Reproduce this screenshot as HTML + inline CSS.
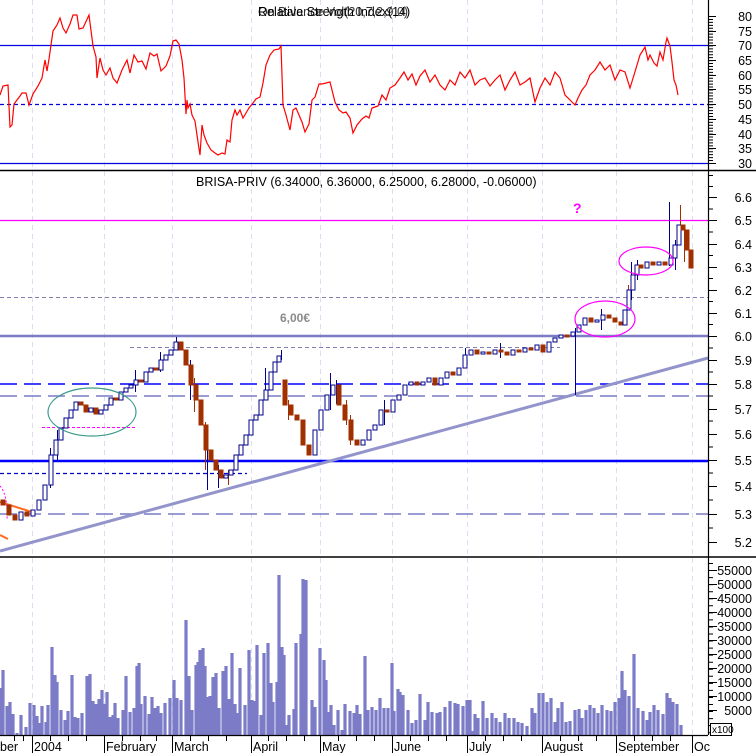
<!DOCTYPE html>
<html><head><meta charset="utf-8"><style>
html,body{margin:0;padding:0;background:#fff;}
svg{display:block;font-family:"Liberation Sans",sans-serif;}
.u{fill:#fff;stroke:#00008b;stroke-width:1;width:4px}
.d{fill:#a03000;stroke:#a03000;stroke-width:1;width:4px}
.lab{font-size:12.5px;fill:#000;text-anchor:end}
</style></head><body>
<svg width="756" height="753" viewBox="0 0 756 753" xmlns="http://www.w3.org/2000/svg">
<rect width="756" height="753" fill="#fff"/>
<g stroke="#dcdcf4" stroke-width="1" stroke-dasharray="5 4">
<path d="M32.5 0V735M104.5 0V735M172.5 0V735M251.5 0V735M320.5 0V735M392.5 0V735M467.5 0V735M542.5 0V735M616.5 0V735M692.5 0V735"/>
</g>
<line x1="0" y1="45.5" x2="708" y2="45.5" stroke="#0000e0" stroke-width="1.3"/>
<line x1="0" y1="163.5" x2="708" y2="163.5" stroke="#0000e0" stroke-width="1.3"/>
<line x1="0" y1="104.5" x2="708" y2="104.5" stroke="#0000e0" stroke-width="1.3" stroke-dasharray="4 3"/>
<polyline fill="none" stroke="#ff0000" stroke-width="1.2" points="0,95 3,86 8,85 10,127 12,125 14,104 20,96 22,93 26,93 29,105 33,94 38,86 42,78 45,60 47,71 49,59 51,45 53,31 57,25 60,18 63,28 66,33 70,24 73,15 77,15 79,29 83,28 89,15 93,46 96,57 97,78 100,58 103,70 106,75 110,68 113,78 117,83 122,70 127,60 130,73 134,55 138,62 142,61 146,69 150,53 154,56 157,54 161,71 166,66 170,56 173,41 176,40 179,44 182,60 184,78 186,114 187,100 188,108 190,104 192,115 195,121 198,142 200,155 202,125 204,135 207,143 211,150 215,153 218,155 222,153 225,154 227,140 230,142 232,120 235,110 237,115 240,110 243,118 246,113 249,108 253,103 256,99 260,97 263,83 266,65 270,55 274,50 279,49 281,46 283,105 286,115 290,130 293,110 296,108 299,115 302,122 305,132 309,124 312,100 315,97 319,84 322,84 330,82 335,102 339,110 343,113 346,112 350,118 353,133 357,125 362,119 366,116 369,118 372,108 378,106 382,95 386,100 390,88 395,85 400,78 404,72 408,80 412,74 416,85 420,76 425,70 430,82 435,75 440,85 445,90 450,80 455,85 460,72 465,78 470,70 475,85 480,80 485,78 490,86 495,80 500,75 505,90 510,80 515,72 520,85 525,82 530,78 535,102 540,88 545,78 550,85 555,72 560,78 565,95 570,100 575,105 578,98 582,90 586,85 590,75 595,70 600,62 605,70 610,65 615,80 620,70 625,72 630,88 634,75 640,55 645,47 648,60 650,55 654,63 657,66 660,52 663,60 666,42 667,38 670,46 672,62 674,80 676,85 678,95"/>
<text x="258" y="16" font-size="12.5" fill="#000">Relative Strength Index(14)</text>
<text x="258" y="16" font-size="12.5" fill="#000" opacity="0.8">On Balance Vol(20,7,2,9,0)</text>
<line x1="0" y1="170.5" x2="756" y2="170.5" stroke="#000" stroke-width="1.5"/>
<line x1="0" y1="220.5" x2="708" y2="220.5" stroke="#ff00ff" stroke-width="1.3"/>
<line x1="0" y1="297.5" x2="708" y2="297.5" stroke="#8080b0" stroke-width="1" stroke-dasharray="4 3"/>
<line x1="130" y1="347.5" x2="560" y2="347.5" stroke="#8080b0" stroke-width="1" stroke-dasharray="4 3"/>
<line x1="0" y1="336" x2="708" y2="336" stroke="#7b7bc6" stroke-width="2.5"/>
<line x1="0" y1="384" x2="708" y2="384" stroke="#0000ff" stroke-width="1.5" stroke-dasharray="17 7"/>
<line x1="0" y1="396" x2="708" y2="396" stroke="#7b7bc6" stroke-width="1.5" stroke-dasharray="17 7"/>
<line x1="0" y1="461" x2="708" y2="461" stroke="#0000ff" stroke-width="2.5"/>
<line x1="0" y1="473.5" x2="247" y2="473.5" stroke="#0000c0" stroke-width="1.2" stroke-dasharray="4 3"/>
<line x1="0" y1="514" x2="708" y2="514" stroke="#7b7bc6" stroke-width="1.5" stroke-dasharray="17 7"/>
<line x1="42" y1="427.5" x2="135" y2="427.5" stroke="#ff00ff" stroke-width="1" stroke-dasharray="3 2"/>
<line x1="0" y1="551" x2="708" y2="358" stroke="#9494cc" stroke-width="3"/>
<line x1="0" y1="502" x2="32" y2="512" stroke="#ff6a20" stroke-width="2"/>
<line x1="0" y1="535" x2="8" y2="539" stroke="#ff6a20" stroke-width="2"/>
<path d="M0 486 Q8 495 7 520" fill="none" stroke="#ff00ff" stroke-width="1" stroke-dasharray="2 2"/>
<text x="280" y="322" font-size="12" font-weight="bold" fill="#8a8a8a">6,00€</text>
<text x="573" y="213" font-size="14" font-weight="bold" fill="#ff00ff">?</text>
<text x="196" y="186" font-size="12.5" fill="#000">BRISA-PRIV (6.34000, 6.36000, 6.25000, 6.28000, -0.06000)</text>
<path fill="none" stroke="#00008b" stroke-width="1" d="M50.5 448V488M57.5 430V460M135.5 370V392M160.5 352V372M176.5 337V350M190.5 360V400M207.5 442V490M218.5 465V488M265.5 368V400M281.5 350V360M330.5 373V410M336.5 380V404M384.5 400V425M465.5 348V364M500.5 343V358M575.5 328V395M601.5 309V330M631.5 262V300M637.5 260V280M669.5 202V266M675.5 240V270"/>
<path fill="none" stroke="#a03000" stroke-width="1" d="M194.5 378V412M205.5 422V470M228.5 470V485M288.5 400V420M346.5 400V425M350.5 415V445M628.5 285V300M680.5 205V235M684.5 228V262"/>
<g>
<rect class="d" x="1" y="500" width="3" height="5"/><rect class="d" x="7" y="505" width="3" height="10"/><rect class="d" x="13" y="515" width="3" height="5"/><rect class="u" x="19" y="512" width="3" height="8"/><rect class="d" x="25" y="512" width="3" height="4"/><rect class="u" x="31" y="510" width="3" height="6"/><rect class="u" x="37" y="500" width="3" height="10"/><rect class="u" x="43" y="485" width="3" height="15"/><rect class="u" x="49" y="455" width="3" height="30"/><rect class="u" x="54" y="440" width="3" height="15"/><rect class="u" x="59" y="428" width="3" height="12"/><rect class="u" x="64" y="418" width="3" height="10"/><rect class="u" x="69" y="410" width="3" height="8"/><rect class="u" x="74" y="402" width="3" height="8"/><rect class="d" x="79" y="402" width="3" height="3"/><rect class="d" x="84" y="405" width="3" height="7"/><rect class="u" x="89" y="408" width="3" height="4"/><rect class="d" x="94" y="408" width="3" height="6"/><rect class="u" x="99" y="410" width="3" height="4"/><rect class="u" x="104" y="405" width="3" height="5"/><rect class="u" x="109" y="398" width="3" height="7"/><rect class="d" x="114" y="398" width="3" height="2"/><rect class="u" x="119" y="392" width="3" height="8"/><rect class="u" x="124" y="388" width="3" height="4"/><rect class="u" x="129" y="385" width="3" height="3"/><rect class="u" x="134" y="380" width="3" height="5"/><rect class="d" x="139" y="380" width="3" height="2"/><rect class="u" x="144" y="372" width="3" height="10"/><rect class="u" x="149" y="368" width="3" height="4"/><rect class="d" x="154" y="368" width="3" height="2"/><rect class="u" x="159" y="360" width="3" height="10"/><rect class="u" x="164" y="355" width="3" height="5"/><rect class="u" x="169" y="350" width="3" height="5"/><rect class="u" x="174" y="342" width="3" height="8"/><rect class="d" x="179" y="342" width="3" height="8"/><rect class="d" x="184" y="350" width="3" height="15"/><rect class="d" x="189" y="365" width="3" height="20"/><rect class="d" x="194" y="385" width="3" height="15"/><rect class="d" x="199" y="400" width="3" height="25"/><rect class="d" x="204" y="425" width="3" height="25"/><rect class="d" x="209" y="450" width="3" height="10"/><rect class="d" x="214" y="460" width="3" height="10"/><rect class="d" x="219" y="470" width="3" height="8"/><rect class="u" x="224" y="475" width="3" height="3"/><rect class="u" x="229" y="470" width="3" height="5"/><rect class="u" x="234" y="455" width="3" height="15"/><rect class="u" x="239" y="445" width="3" height="10"/><rect class="u" x="244" y="435" width="3" height="10"/><rect class="u" x="249" y="420" width="3" height="15"/><rect class="u" x="254" y="415" width="3" height="5"/><rect class="u" x="259" y="400" width="3" height="15"/><rect class="u" x="264" y="390" width="3" height="10"/><rect class="u" x="269" y="372" width="3" height="18"/><rect class="u" x="273" y="362" width="3" height="10"/><rect class="u" x="277" y="356" width="3" height="6"/>
<rect class="d" x="283" y="380" width="3" height="25"/><rect class="d" x="289" y="405" width="3" height="10"/><rect class="d" x="295" y="415" width="3" height="5"/><rect class="d" x="301" y="420" width="3" height="25"/><rect class="d" x="307" y="445" width="3" height="10"/><rect class="u" x="313" y="430" width="3" height="25"/><rect class="u" x="319" y="410" width="3" height="20"/><rect class="u" x="325" y="395" width="3" height="15"/><rect class="u" x="331" y="385" width="3" height="10"/><rect class="d" x="337" y="385" width="3" height="20"/><rect class="d" x="343" y="405" width="3" height="15"/><rect class="d" x="349" y="420" width="3" height="20"/><rect class="d" x="355" y="440" width="3" height="5"/><rect class="u" x="361" y="440" width="3" height="5"/><rect class="u" x="367" y="430" width="3" height="10"/><rect class="u" x="373" y="425" width="3" height="5"/><rect class="u" x="379" y="410" width="3" height="15"/><rect class="d" x="385" y="410" width="3" height="2"/><rect class="u" x="391" y="400" width="3" height="12"/><rect class="u" x="397" y="395" width="3" height="5"/><rect class="u" x="403" y="385" width="3" height="10"/><rect class="u" x="409" y="382" width="3" height="3"/><rect class="d" x="415" y="382" width="3" height="3"/><rect class="u" x="421" y="382" width="3" height="3"/><rect class="u" x="427" y="378" width="3" height="4"/><rect class="d" x="433" y="378" width="3" height="7"/><rect class="u" x="439" y="378" width="3" height="7"/><rect class="u" x="445" y="372" width="3" height="6"/><rect class="d" x="451" y="372" width="3" height="3"/><rect class="u" x="457" y="368" width="3" height="7"/><rect class="u" x="463" y="355" width="3" height="13"/><rect class="u" x="469" y="350" width="3" height="5"/><rect class="d" x="475" y="350" width="3" height="4"/><rect class="u" x="481" y="352" width="3" height="2"/><rect class="d" x="487" y="352" width="3" height="2"/><rect class="u" x="493" y="350" width="3" height="4"/><rect class="d" x="499" y="350" width="3" height="2"/><rect class="d" x="505" y="352" width="3" height="3"/><rect class="u" x="511" y="350" width="3" height="5"/><rect class="d" x="517" y="350" width="3" height="2"/><rect class="u" x="523" y="348" width="3" height="4"/><rect class="d" x="529" y="348" width="3" height="2"/><rect class="u" x="535" y="345" width="3" height="5"/><rect class="d" x="541" y="345" width="3" height="7"/><rect class="u" x="547" y="342" width="3" height="10"/><rect class="u" x="553" y="338" width="3" height="4"/><rect class="u" x="559" y="335" width="3" height="3"/><rect class="d" x="565" y="335" width="3" height="2"/><rect class="u" x="571" y="332" width="3" height="4"/><rect class="u" x="577" y="325" width="3" height="7"/><rect class="u" x="583" y="318" width="3" height="7"/><rect class="d" x="589" y="318" width="3" height="4"/><rect class="u" x="595" y="320" width="3" height="2"/><rect class="u" x="601" y="315" width="3" height="5"/><rect class="d" x="607" y="315" width="3" height="3"/><rect class="d" x="613" y="318" width="3" height="4"/><rect class="d" x="619" y="322" width="3" height="3"/><rect class="u" x="623" y="310" width="3" height="15"/><rect class="u" x="627" y="290" width="3" height="20"/><rect class="u" x="631" y="275" width="3" height="15"/><rect class="u" x="635" y="265" width="3" height="10"/><rect class="d" x="639" y="265" width="3" height="3"/><rect class="u" x="645" y="262" width="3" height="6"/><rect class="d" x="651" y="262" width="3" height="3"/><rect class="u" x="657" y="262" width="3" height="3"/><rect class="d" x="663" y="262" width="3" height="3"/><rect class="u" x="669" y="258" width="3" height="7"/><rect class="u" x="673" y="245" width="3" height="13"/><rect class="u" x="677" y="225" width="3" height="20"/><rect class="d" x="681" y="225" width="3" height="5"/><rect class="d" x="685" y="230" width="3" height="20"/><rect class="d" x="689" y="250" width="3" height="18"/>
</g>
<ellipse cx="92" cy="412" rx="44" ry="24" fill="none" stroke="#3a9a8a" stroke-width="1.2"/>
<ellipse cx="605" cy="319" rx="30" ry="18" fill="none" stroke="#ff00ff" stroke-width="1.2"/>
<ellipse cx="646" cy="261" rx="27" ry="14" fill="none" stroke="#ff00ff" stroke-width="1.2"/>
<line x1="0" y1="557" x2="756" y2="557" stroke="#000" stroke-width="1.5"/>
<path fill="none" stroke="#7b7bc8" stroke-width="3.2" d="M0 735V688M3 735V670M7 735V706M10 735V702M13 735V714M17 735V733M21 735V715M26 735V727M30 735V703M34 735V705M37 735V716M40 735V723M42 735V706M46 735V722M48 735V705M52 735V647M55 735V675M57 735V682M61 735V710M65 735V720M68 735V711M72 735V675M75 735V717M78 735V718M82 735V713M87 735V676M90 735V674M93 735V701M96 735V704M99 735V699M102 735V690M104 735V704M107 735V692M110 735V717M113 735V715M115 735V703M118 735V718M123 735V710M126 735V676M130 735V712M134 735V708M137 735V666M139 735V663M141 735V704M145 735V696M149 735V714M152 735V697M155 735V708M158 735V706M161 735V713M165 735V703M170 735V698M174 735V680M177 735V698M181 735V700M186 735V620M189 735V676M192 735V710M196 735V665M198 735V662M200 735V650M203 735V648M205 735V666M207 735V697M210 735V696M213 735V677M216 735V673M219 735V708M223 735V671M226 735V666M229 735V699M232 735V653M235 735V704M238 735V713M240 735V668M245 735V705M249 735V650M252 735V700M254 735V701M257 735V645M261 735V715M264 735V653M268 735V643M271 735V683M273 735V702M277 735V682M279 735V575M282 735V647M284 735V655M287 735V725M289 735V715M294 735V709M296 735V643M301 735V634M303 735V579M306 735V580M312 735V700M315 735V707M320 735V648M324 735V660M326 735V680M328 735V712M331 735V705M334 735V725M338 735V710M342 735V730M345 735V704M350 735V711M354 735V713M357 735V705M360 735V714M365 735V656M368 735V710M372 735V707M376 735V710M380 735V698M384 735V708M388 735V708M392 735V663M394 735V711M398 735V689M400 735V692M403 735V695M408 735V710M412 735V723M416 735V720M420 735V694M425 735V720M428 735V702M432 735V712M437 735V713M440 735V712M445 735V707M450 735V701M455 735V703M458 735V704M463 735V706M467 735V700M470 735V700M472 735V731M475 735V714M478 735V718M483 735V701M487 735V718M492 735V713M496 735V718M500 735V722M505 735V713M509 735V718M514 735V718M518 735V722M522 735V723M527 735V726M532 735V708M535 735V713M539 735V693M543 735V693M547 735V702M551 735V698M555 735V722M558 735V708M562 735V702M566 735V722M570 735V721M575 735V710M579 735V709M582 735V718M586 735V710M590 735V705M594 735V708M598 735V713M602 735V705M607 735V710M611 735V711M615 735V702M619 735V698M622 735V671M625 735V690M629 735V696M634 735V654M638 735V708M643 735V711M647 735V720M650 735V712M654 735V705M658 735V710M663 735V714M667 735V693M670 735V698M673 735V702M677 735V704M681 735V725"/>
<line x1="0" y1="735.5" x2="708" y2="735.5" stroke="#000" stroke-width="1.2"/>
<path stroke="#000" stroke-width="1" d="M32.5 735V753M104.5 735V753M172.5 735V753M251.5 735V753M320.5 735V753M392.5 735V753M467.5 735V753M542.5 735V753M616.5 735V753M692.5 735V753M14.5 735V741M23.5 735V741M50.5 735V741M68.5 735V741M86.5 735V741M122.5 735V741M140.5 735V741M156.5 735V741M190.5 735V741M208.5 735V741M226.5 735V741M268.5 735V741M286.5 735V741M304.5 735V741M338.5 735V741M356.5 735V741M374.5 735V741M410.5 735V741M428.5 735V741M446.5 735V741M485.5 735V741M503.5 735V741M521.5 735V741M560.5 735V741M578.5 735V741M596.5 735V741M634.5 735V741M652.5 735V741M670.5 735V741"/>
<g font-size="12.5" fill="#000">
<text x="0" y="751">ber</text><text x="34" y="751">2004</text><text x="106" y="751">February</text><text x="174" y="751">March</text><text x="253" y="751">April</text><text x="322" y="751">May</text><text x="394" y="751">June</text><text x="469" y="751">July</text><text x="544" y="751">August</text><text x="618" y="751">September</text><text x="694" y="751">Oc</text>
</g>
<line x1="708.5" y1="0" x2="708.5" y2="735" stroke="#000" stroke-width="1.2"/>
<line x1="711" y1="16" x2="711" y2="164" stroke="#000" stroke-width="4" stroke-dasharray="1 1.94"/>
<path stroke="#000" d="M708 16.5H716M708 31.5H716M708 45.5H716M708 60.5H716M708 75.5H716M708 89.5H716M708 104.5H716M708 119.5H716M708 134.5H716M708 148.5H716M708 163.5H716"/>
<path stroke="#000" d="M708 175.5H713M708 186.5H713M708 197.5H717M708 209H713M708 220.5H717M708 232H713M708 244.5H717M708 255.5H713M708 267.5H717M708 278.5H713M708 290.5H717M708 301.5H713M708 313.5H717M708 324.5H713M708 336.5H717M708 348H713M708 360.5H717M708 372H713M708 384.5H717M708 396H713M708 409.5H717M708 421H713M708 434.5H717M708 447H713M708 460.5H717M708 473H713M708 486.5H717M708 500H713M708 514.5H717M708 528H713M708 542.5H717"/>
<line x1="711" y1="563" x2="711" y2="735" stroke="#000" stroke-width="4" stroke-dasharray="1 6.05"/>
<path stroke="#000" d="M708 570.5H717M708 584.5H717M708 598.5H717M708 612.5H717M708 626.5H717M708 640.5H717M708 654.5H717M708 668.5H717M708 682.5H717M708 696.5H717M708 710.5H717"/>
<g class="lab">
<text x="752" y="21" class="lab">80</text><text x="752" y="36" class="lab">75</text><text x="752" y="50" class="lab">70</text><text x="752" y="65" class="lab">65</text><text x="752" y="80" class="lab">60</text><text x="752" y="94" class="lab">55</text><text x="752" y="109" class="lab">50</text><text x="752" y="124" class="lab">45</text><text x="752" y="139" class="lab">40</text><text x="752" y="153" class="lab">35</text><text x="752" y="168" class="lab">30</text>
<text x="752" y="202" class="lab">6.6</text><text x="752" y="225" class="lab">6.5</text><text x="752" y="249" class="lab">6.4</text><text x="752" y="272" class="lab">6.3</text><text x="752" y="295" class="lab">6.2</text><text x="752" y="318" class="lab">6.1</text><text x="752" y="341" class="lab">6.0</text><text x="752" y="365" class="lab">5.9</text><text x="752" y="389" class="lab">5.8</text><text x="752" y="414" class="lab">5.7</text><text x="752" y="439" class="lab">5.6</text><text x="752" y="465" class="lab">5.5</text><text x="752" y="491" class="lab">5.4</text><text x="752" y="519" class="lab">5.3</text><text x="752" y="547" class="lab">5.2</text>
<text x="752" y="575" class="lab">55000</text><text x="752" y="589" class="lab">50000</text><text x="752" y="603" class="lab">45000</text><text x="752" y="617" class="lab">40000</text><text x="752" y="631" class="lab">35000</text><text x="752" y="645" class="lab">30000</text><text x="752" y="659" class="lab">25000</text><text x="752" y="673" class="lab">20000</text><text x="752" y="687" class="lab">15000</text><text x="752" y="701" class="lab">10000</text><text x="752" y="715" class="lab">5000</text>
</g>
<rect x="710.5" y="723.5" width="21" height="12" fill="#fff" stroke="#000" stroke-width="1"/>
<text x="712" y="733" font-size="10" fill="#000">x100</text>
</svg>
</body></html>
